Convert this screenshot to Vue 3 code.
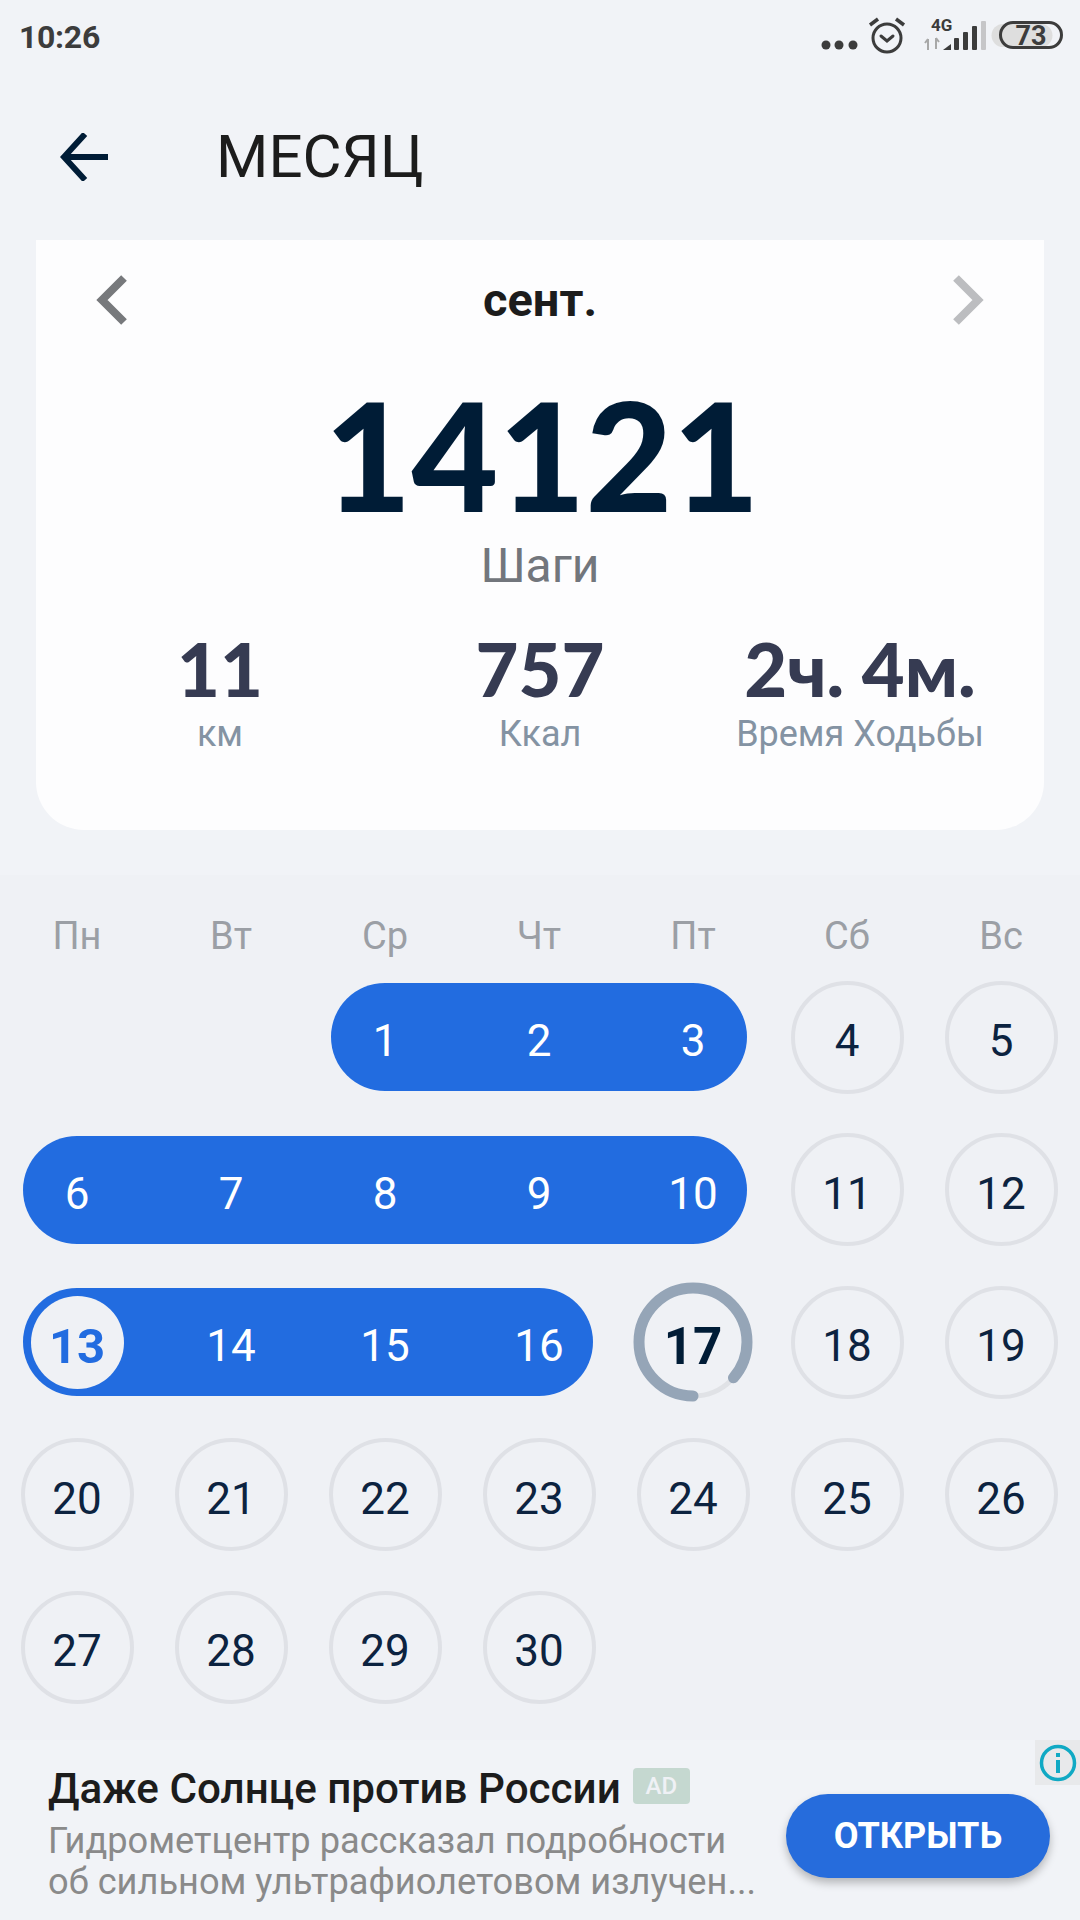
<script setup>
const weekdays = ['Пн', 'Вт', 'Ср', 'Чт', 'Пт', 'Сб', 'Вс']

const stats = [
  { value: '11', label: 'км' },
  { value: '757', label: 'Ккал' },
  { value: '2ч. 4м.', label: 'Время Ходьбы' }
]

// completed stretches of the month are drawn as one pill
const cells = [
  { type: 'empty' },
  { type: 'empty' },
  { type: 'pill', days: [1, 2, 3] },
  { type: 'day', day: 4 },
  { type: 'day', day: 5 },
  { type: 'pill', days: [6, 7, 8, 9, 10] },
  { type: 'day', day: 11 },
  { type: 'day', day: 12 },
  { type: 'pill', days: [13, 14, 15, 16], first: true },
  { type: 'today', day: 17 },
  { type: 'day', day: 18 },
  { type: 'day', day: 19 }
]
for (let d = 20; d <= 30; d++) cells.push({ type: 'day', day: d })

const ringRadius = 54
const ringLength = 2 * Math.PI * ringRadius
const ringDash = ringLength * (311 / 360)
</script>

<template>
  <div class="screen">
    <div class="status">
      <span class="time">10:26</span>
      <svg class="status_icons" width="250" height="50" viewBox="0 0 250 50">
        <g fill="#3c3c3c">
          <circle cx="6" cy="35" r="4.5" />
          <circle cx="19" cy="35" r="4.5" />
          <circle cx="33" cy="35" r="4.5" />
        </g>
        <g fill="none" stroke="#3c3c3c" stroke-width="3">
          <circle cx="67" cy="28" r="14" />
          <path d="M61 26l6 5 6-5" stroke-linecap="round" />
          <path d="M50 15l8-6M84 15l-8-6" stroke-width="3.5" />
        </g>
        <text x="111" y="21" class="net">4G</text>
        <path d="M108 40v-11M105 33l3-4M116 28v11M116 28l3 4" stroke="#a8a8a8" stroke-width="2" fill="none" />
        <g fill="#3c3c3c">
          <path d="M123 40l8-6v6z" />
          <rect x="134" y="28" width="5" height="12" rx="1" />
          <rect x="143" y="22" width="5" height="18" rx="1" />
          <rect x="152" y="16" width="5" height="24" rx="1" />
        </g>
        <rect x="161" y="11" width="5" height="29" rx="1" fill="#c6c6c8" />
        <path d="M183 14h38a11.5 11.5 0 0 1 0 23h-38a11.5 11.5 0 0 1 0-23z" fill="#dedede" />
        <rect x="180.500" y="12.500" width="61" height="25" rx="12.500" fill="none" stroke="#3c3c3c" stroke-width="3" />
        <text x="211" y="35" class="charge">73</text>
      </svg>
    </div>

    <header class="top">
      <svg class="back" width="50" height="48" viewBox="0 0 50 48">
        <path d="M48 24H4M25 1L4 24l21 23" fill="none" stroke="#001c36" stroke-width="6" />
      </svg>
      <span class="title">МЕСЯЦ</span>
    </header>

    <section class="card">
      <div class="month_nav">
        <svg width="32" height="50" viewBox="0 0 32 50">
          <path d="M28 3L6 25l22 22" fill="none" stroke="#77797c" stroke-width="8" />
        </svg>
        <span class="month">сент.</span>
        <svg width="32" height="50" viewBox="0 0 32 50">
          <path d="M4 3l22 22L4 47" fill="none" stroke="#bcbdc0" stroke-width="8" />
        </svg>
      </div>
      <div class="steps">14121</div>
      <div class="steps_label">Шаги</div>
      <ul class="stats">
        <li v-for="s in stats" :key="s.label" class="stat">
          <span class="stat_value">{{ s.value }}</span>
          <span class="stat_label">{{ s.label }}</span>
        </li>
      </ul>
    </section>

    <section class="calendar">
      <div class="weekdays">
        <span v-for="w in weekdays" :key="w">{{ w }}</span>
      </div>
      <div class="grid">
        <template v-for="(cell, i) in cells" :key="i">
          <div v-if="cell.type === 'empty'" class="slot"></div>
          <div
            v-else-if="cell.type === 'pill'"
            class="pill"
            :style="{ gridColumn: 'span ' + cell.days.length }"
          >
            <div class="pill_days">
              <span
                v-for="(d, j) in cell.days"
                :key="d"
                class="pill_day"
                :class="{ start: cell.first && j === 0 }"
              ><b>{{ d }}</b></span>
            </div>
          </div>
          <div v-else-if="cell.type === 'today'" class="slot">
            <span class="today">
              <svg class="ring" width="120" height="120" viewBox="0 0 120 120">
                <circle cx="60" cy="60" :r="ringRadius" fill="none" stroke="#e0e2e6" stroke-width="5" />
                <circle
                  cx="60"
                  cy="60"
                  :r="ringRadius"
                  fill="none"
                  stroke="#95a5b7"
                  stroke-width="11"
                  stroke-linecap="round"
                  :stroke-dasharray="ringDash + ' ' + ringLength"
                  transform="rotate(90 60 60)"
                />
              </svg>
              <b>{{ cell.day }}</b>
            </span>
          </div>
          <div v-else class="slot">
            <span class="circle">{{ cell.day }}</span>
          </div>
        </template>
      </div>
    </section>

    <section class="ad">
      <div class="ad_text">
        <div class="ad_head">
          <span class="ad_title">Даже Солнце против России</span>
          <span class="ad_badge">AD</span>
        </div>
        <p class="ad_desc">Гидрометцентр рассказал подробности<br>об сильном ультрафиолетовом излучен...</p>
      </div>
      <button class="ad_button">ОТКРЫТЬ</button>
      <span class="ad_info">
        <svg width="40" height="40" viewBox="0 0 40 40">
          <circle cx="20" cy="20" r="16.500" fill="none" stroke="#10a9c4" stroke-width="3.500" />
          <rect x="18" y="17" width="4" height="13" fill="#10a9c4" />
          <rect x="18" y="10" width="4" height="4" fill="#10a9c4" />
        </svg>
      </span>
    </section>
  </div>
</template>

<style scoped>
.screen {
  width: 1080px;
  height: 1920px;
  overflow: hidden;
  background: #f1f3f7;
  font-family: Roboto, sans-serif;
  display: flex;
  flex-direction: column;
}

.status {
  height: 74px;
  display: flex;
  align-items: flex-start;
  justify-content: space-between;
  padding: 0 10px 0 19px;
  box-sizing: border-box;
}

.time {
  margin-top: 15px;
  font-size: 32px;
  line-height: 44px;
  font-weight: 700;
  color: #3c3c3c;
  letter-spacing: -0.3px;
}

.status_icons {
  margin-top: 10px;
}

.net {
  font: 700 17px Roboto, sans-serif;
  fill: #3c3c3c;
}

.charge {
  font: 700 27px Roboto, sans-serif;
  fill: #3c3c3c;
  text-anchor: middle;
}

.top {
  height: 166px;
  display: flex;
  align-items: center;
  padding: 0 0 0 60px;
  box-sizing: border-box;
}

.title {
  margin-left: 106px;
  font-size: 60px;
  font-weight: 400;
  color: #1c1c1c;
  line-height: 70px;
}

.card {
  margin: 0 36px;
  height: 590px;
  box-sizing: border-box;
  background: #fdfdfe;
  border-radius: 0 0 48px 48px;
  display: flex;
  flex-direction: column;
  align-items: center;
}

.month_nav {
  align-self: stretch;
  display: flex;
  align-items: center;
  justify-content: space-between;
  padding: 30px 60px 0 60px;
  height: 60px;
}

.month {
  font-size: 47px;
  font-weight: 700;
  color: #1c1c1c;
  line-height: 60px;
}

.steps {
  margin-top: 69px;
  padding-left: 4px;
  font-family: Lato, sans-serif;
  font-weight: 900;
  font-size: 150px;
  line-height: 110px;
  color: #001c36;
}

.steps_label {
  margin-top: 30px;
  font-size: 48px;
  line-height: 54px;
  color: #72767c;
}

.stats {
  list-style: none;
  margin: 36px 0 0;
  padding: 0 24px;
  align-self: stretch;
  display: grid;
  grid-template-columns: repeat(3, 1fr);
}

.stat {
  display: flex;
  flex-direction: column;
  align-items: center;
}

.stat_value {
  font-family: Lato, sans-serif;
  font-weight: 900;
  font-size: 74px;
  line-height: 80px;
  color: #363b52;
  white-space: nowrap;
}

.stat_label {
  margin-top: 5px;
  font-size: 36px;
  line-height: 40px;
  color: #8493a3;
  white-space: nowrap;
}

.calendar {
  margin-top: 45px;
  height: 865px;
  background: #eff1f5;
}

.weekdays {
  display: grid;
  grid-template-columns: repeat(7, 154px);
  height: 81px;
  align-items: end;
  font-size: 38px;
  line-height: 40px;
  color: #9b9fa5;
  text-align: center;
}

.grid {
  margin-top: 5px;
  display: grid;
  grid-template-columns: repeat(7, 154px);
  grid-auto-rows: 152.5px;
  font-size: 44px;
  color: #0c2340;
}

.slot {
  display: flex;
  align-items: center;
  justify-content: center;
}

.circle {
  width: 113px;
  height: 113px;
  box-sizing: border-box;
  border: 4px solid #dfe1e6;
  border-radius: 50%;
  padding-top: 8px;
  display: flex;
  align-items: center;
  justify-content: center;
}

.pill {
  margin: 22px 23px;
  height: 108px;
  border-radius: 54px;
  background: #226ce0;
  color: #fff;
}

.pill_days {
  margin: 0 -23px;
  height: 100%;
  display: flex;
}

.pill_day {
  flex: 0 0 154px;
  padding-top: 8px;
  box-sizing: border-box;
  display: flex;
  align-items: center;
  justify-content: center;
}

.pill_day b {
  font-weight: 400;
}

.pill_day.start {
  padding-top: 0;
}

.pill_day.start b {
  width: 93px;
  height: 93px;
  box-sizing: border-box;
  padding-top: 8px;
  border-radius: 50%;
  background: #eff1f5;
  color: #226ce0;
  font-weight: 700;
  font-size: 49px;
  display: flex;
  align-items: center;
  justify-content: center;
}

.today {
  position: relative;
  width: 120px;
  height: 120px;
  box-sizing: border-box;
  padding-top: 8px;
  display: flex;
  align-items: center;
  justify-content: center;
  font-size: 51px;
  color: #001c36;
}

.ring {
  position: absolute;
  left: 0;
  top: 0;
}

.ad {
  position: relative;
  flex: 1;
  display: flex;
  align-items: flex-start;
  justify-content: space-between;
  padding: 24px 30px 0 48px;
}

.ad_head {
  display: flex;
  align-items: center;
  gap: 12px;
}

.ad_title {
  font-size: 42.2px;
  font-weight: 500;
  line-height: 50px;
  color: #1c1c1c;
  white-space: nowrap;
}

.ad_badge {
  margin-top: -7px;
  width: 57px;
  height: 36px;
  border-radius: 4px;
  background: #c5d8d0;
  color: #eff1f5;
  font-size: 24px;
  font-weight: 500;
  display: flex;
  align-items: center;
  justify-content: center;
}

.ad_desc {
  margin: 6px 0 0;
  font-size: 36.2px;
  line-height: 41px;
  color: #8a8a8a;
  white-space: nowrap;
}

.ad_button {
  margin-top: 30px;
  width: 264px;
  height: 84px;
  border: 0;
  border-radius: 42px;
  background: #266cdc;
  color: #fff;
  font-family: Roboto, sans-serif;
  font-size: 36px;
  font-weight: 700;
  box-shadow: 0 5px 8px rgba(0, 0, 0, 0.25);
}

.ad_info {
  position: absolute;
  right: 0;
  top: 0;
  width: 45px;
  height: 45px;
  background: #e8e9eb;
  display: flex;
  align-items: center;
  justify-content: center;
}
</style>
